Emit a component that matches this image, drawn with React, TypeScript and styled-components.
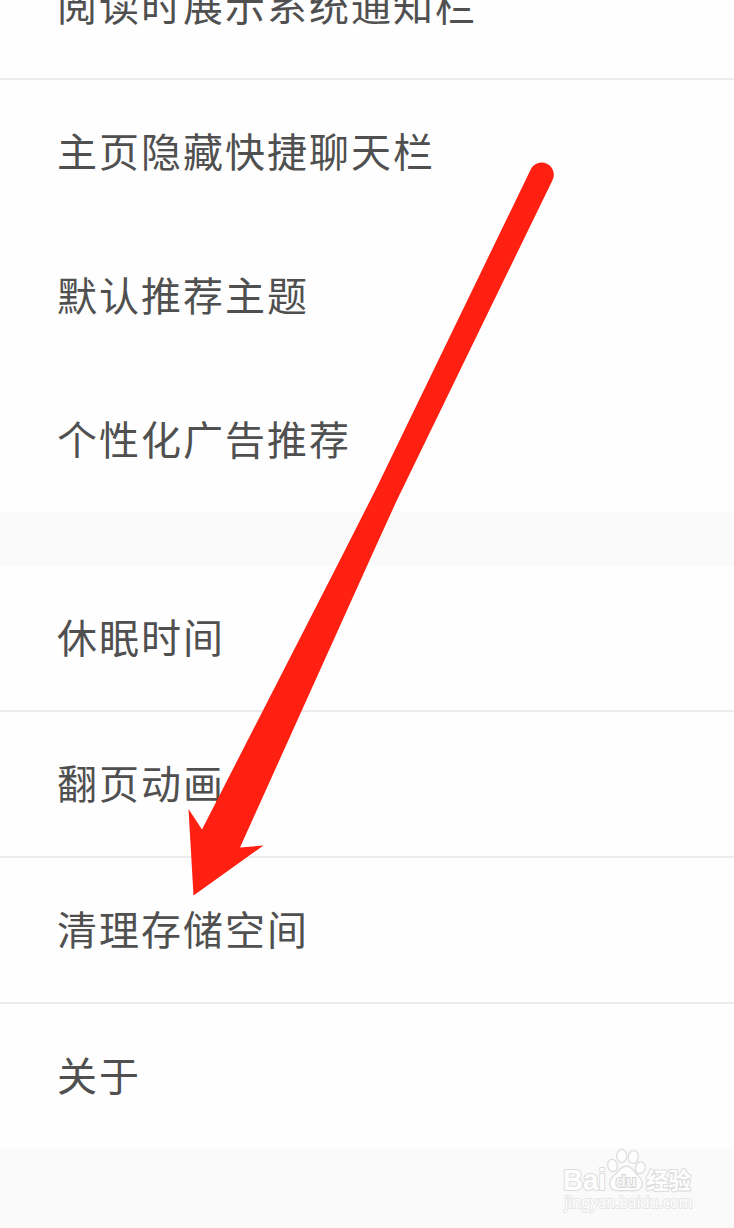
import React from "react";
import styled, { createGlobalStyle } from "styled-components";

const GlobalStyle = createGlobalStyle`
  body { margin: 0; background: #fafafa; }
`;

const Screen = styled.main`
  position: relative;
  width: 734px;
  height: 1228px;
  overflow: hidden;
  background: #fafafa;
  display: flex;
  flex-direction: column;
  font-family: "Noto Sans CJK SC", sans-serif;
`;

const Group = styled.section<{ $scrolled?: boolean }>`
  flex: none;
  background: #fefefe;
  margin-top: ${(p) => (p.$scrolled ? "-66px" : "54px")};
`;

const Row = styled.div<{ $divider?: boolean }>`
  display: flex;
  align-items: center;
  height: 140px;
  padding: 0 0 4px 57px;
  border-bottom: ${(p) => (p.$divider ? "2px solid #ebebeb" : "0")};
`;

const Label = styled.span`
  font-size: 40px;
  line-height: 60px;
  letter-spacing: 2px;
  color: #505050;
  white-space: nowrap;
`;

const ArrowLayer = styled.svg`
  position: absolute;
  left: 0;
  top: 0;
`;

const Watermark = styled.svg`
  position: absolute;
  left: 556px;
  top: 1144px;
`;

type Item = { text: string; divider?: boolean };

const reading: Item[] = [
  { text: "阅读时展示系统通知栏", divider: true },
  { text: "主页隐藏快捷聊天栏" },
  { text: "默认推荐主题" },
  { text: "个性化广告推荐" },
];

const general: Item[] = [
  { text: "休眠时间", divider: true },
  { text: "翻页动画", divider: true },
  { text: "清理存储空间", divider: true },
  { text: "关于" },
];

const Rows = ({ items }: { items: Item[] }) => (
  <>
    {items.map((item) => (
      <Row key={item.text} $divider={item.divider}>
        <Label>{item.text}</Label>
      </Row>
    ))}
  </>
);

const Arrow = () => (
  <ArrowLayer width="734" height="1228" viewBox="0 0 734 1228">
    <path
      fill="#ff2012"
      d="M530.700 169.500A12.050 12.050 0 0 1 552.600 180L397 500L376 546L240 847.500L263.500 845.500L193.500 895.500L188.500 809L202 829.500L340 560L376 489Z"
    />
  </ArrowLayer>
);

const BaiduMark = () => (
  <Watermark width="150" height="76" viewBox="0 0 150 76">
    <g fill="#fefefe" stroke="#dfdfdf" strokeWidth="1.4">
      <ellipse cx="56.500" cy="21.500" rx="4.800" ry="6.200" transform="rotate(-12 56.5 21.5)" />
      <ellipse cx="65.700" cy="12" rx="5" ry="6.600" />
      <ellipse cx="77.300" cy="13" rx="5" ry="6.400" transform="rotate(8 77.3 13)" />
      <ellipse cx="84.300" cy="23.700" rx="4.800" ry="6" transform="rotate(14 84.3 23.7)" />
      <path d="M70.500 22.300C64 22.300 62.500 28 58 31.500C53 35.500 52.500 41.500 56 45C60 48 65 46.500 70.500 46.500C76 46.500 80 48 84 45C88 41.500 86.500 35.500 82 31.500C78 28 76.500 22.300 70.500 22.300Z" />
    </g>
    <g fill="#fefefe" stroke="#dddddd" strokeWidth="2.200" paintOrder="stroke" strokeLinejoin="round">
      <text x="7" y="45.500" fontFamily="Liberation Sans" fontWeight="700" fontSize="30" textLength="43" lengthAdjust="spacingAndGlyphs">Bai</text>
      <text x="90" y="44.500" fontFamily="Noto Sans CJK SC" fontWeight="700" fontSize="23" textLength="45" lengthAdjust="spacingAndGlyphs">经验</text>
    </g>
    <text x="59.500" y="42.500" fill="#f6f6f6" stroke="#d4d4d4" strokeWidth="1.800" paintOrder="stroke" fontFamily="Liberation Sans" fontWeight="700" fontSize="17" textLength="21" lengthAdjust="spacingAndGlyphs">du</text>
    <text x="8.500" y="63.500" fill="#fff" stroke="#e4e4e4" strokeWidth="1.800" paintOrder="stroke" fontFamily="Noto Sans" fontSize="16" textLength="128" lengthAdjust="spacingAndGlyphs">jingyan.baidu.com</text>
  </Watermark>
);

export default function App() {
  return (
    <>
      <GlobalStyle />
      <Screen>
        <Group $scrolled>
          <Rows items={reading} />
        </Group>
        <Group>
          <Rows items={general} />
        </Group>
        <Arrow />
        <BaiduMark />
      </Screen>
    </>
  );
}
